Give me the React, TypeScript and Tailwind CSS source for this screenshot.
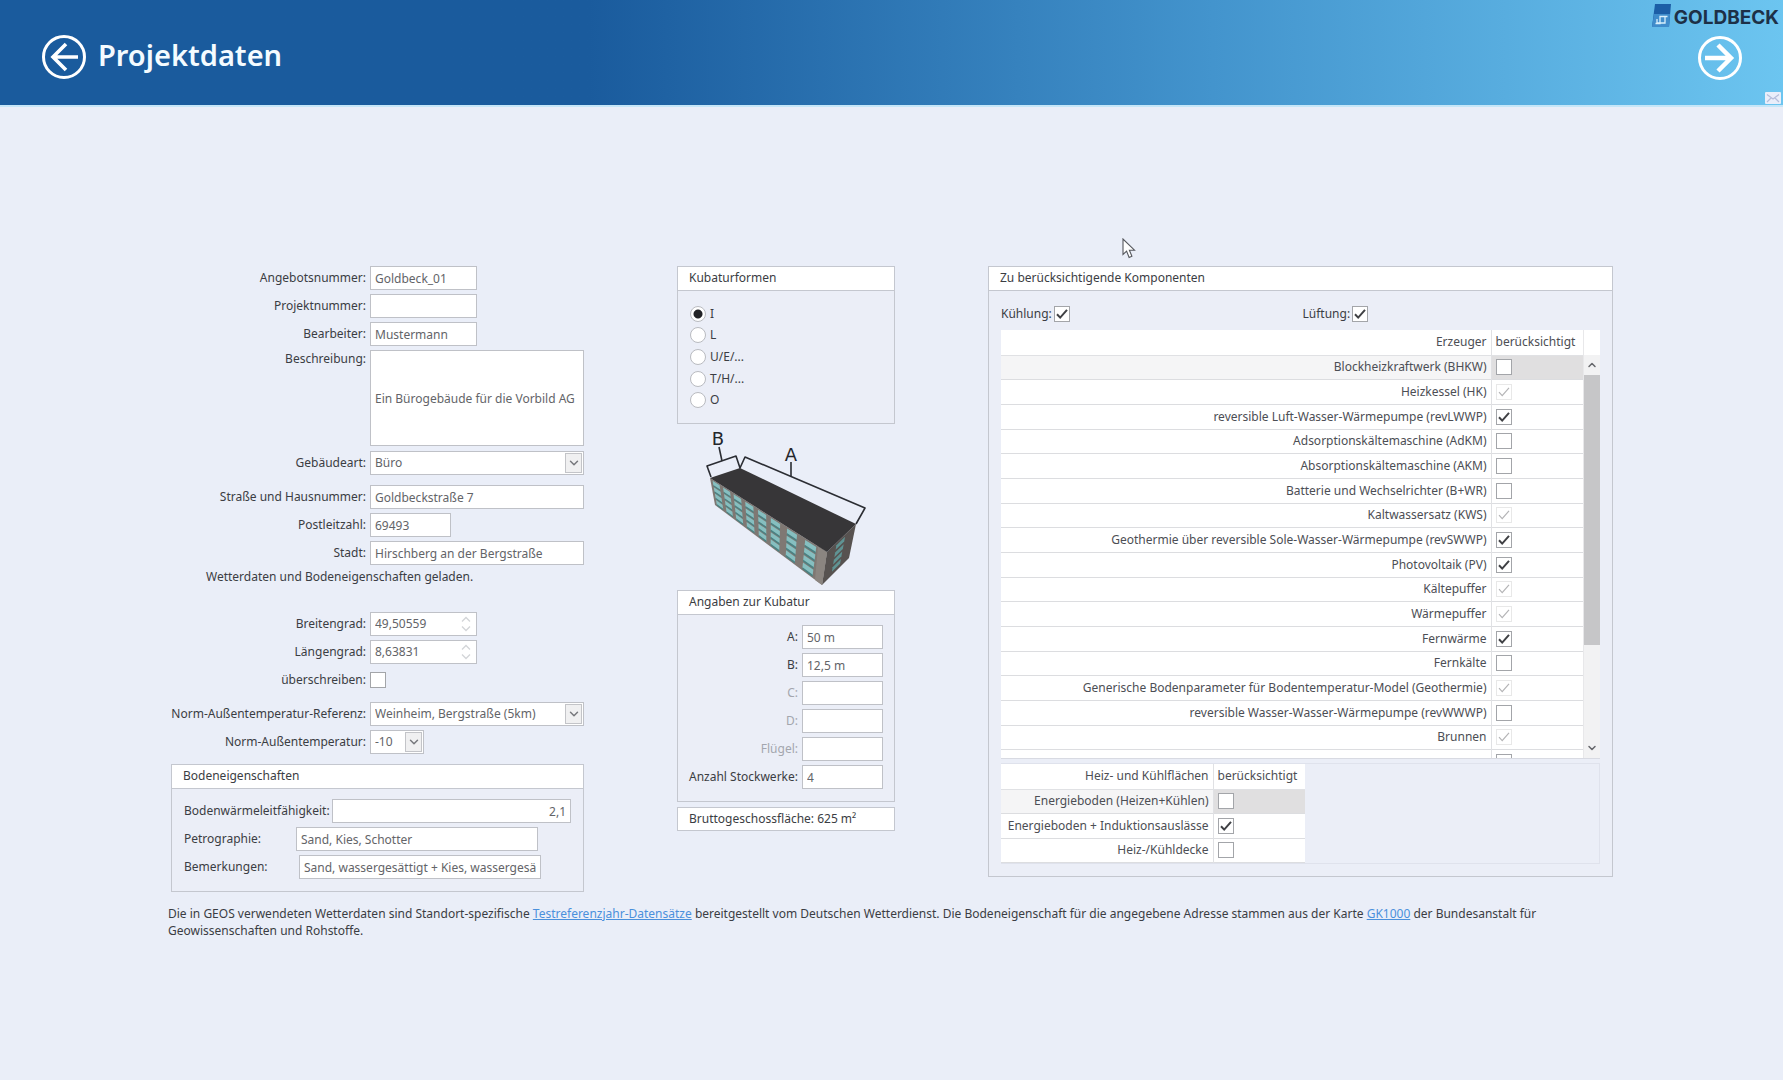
import * as React from "react";
import { ChevronDown, ChevronUp } from "lucide-react";
import clsx from "clsx";

interface ComponentRow {
  name: string;
  checked?: boolean;
  disabled?: boolean;
}

const PRODUCERS: ComponentRow[] = [
  { name: "Blockheizkraftwerk (BHKW)" },
  { name: "Heizkessel (HK)", checked: true, disabled: true },
  { name: "reversible Luft-Wasser-Wärmepumpe (revLWWP)", checked: true },
  { name: "Adsorptionskältemaschine (AdKM)" },
  { name: "Absorptionskältemaschine (AKM)" },
  { name: "Batterie und Wechselrichter (B+WR)" },
  { name: "Kaltwassersatz (KWS)", checked: true, disabled: true },
  { name: "Geothermie über reversible Sole-Wasser-Wärmepumpe (revSWWP)", checked: true },
  { name: "Photovoltaik (PV)", checked: true },
  { name: "Kältepuffer", checked: true, disabled: true },
  { name: "Wärmepuffer", checked: true, disabled: true },
  { name: "Fernwärme", checked: true },
  { name: "Fernkälte" },
  { name: "Generische Bodenparameter für Bodentemperatur-Model (Geothermie)", checked: true, disabled: true },
  { name: "reversible Wasser-Wasser-Wärmepumpe (revWWWP)" },
  { name: "Brunnen", checked: true, disabled: true },
  { name: "" },
];

const SURFACES: ComponentRow[] = [
  { name: "Energieboden (Heizen+Kühlen)" },
  { name: "Energieboden + Induktionsauslässe", checked: true },
  { name: "Heiz-/Kühldecke" },
];

const SHAPES = ["I", "L", "U/E/...", "T/H/...", "O"];

const inputClass = "h-6 border border-[#bfc1c7] bg-white px-1 text-[#636468] outline-none";

function Checkbox({
  id,
  label,
  checked,
  disabled,
}: {
  id?: string;
  label?: string;
  checked?: boolean;
  disabled?: boolean;
}) {
  return (
    <span className="grid size-4 shrink-0">
      <input
        id={id}
        type="checkbox"
        aria-label={label}
        defaultChecked={checked}
        disabled={disabled}
        className="peer col-start-1 row-start-1 size-4 appearance-none border border-[#a3a5a9] bg-white disabled:border-[#e8e8e8]"
      />
      <svg
        viewBox="0 0 16 16"
        className="pointer-events-none invisible col-start-1 row-start-1 size-4 text-[#3f4044] peer-checked:visible peer-disabled:text-[#b4b4b6]"
        fill="none"
        stroke="currentColor"
        strokeWidth={disabled ? 1.2 : 2}
      >
        <path d="M3 8.2 6.2 11.6 13 3.8" />
      </svg>
    </span>
  );
}

function Field({
  id,
  label,
  children,
}: {
  id: string;
  label: string;
  children: React.ReactNode;
}) {
  return (
    <div className="flex items-start">
      <label htmlFor={id} className="w-[199px] shrink-0 pr-1 text-right leading-6 whitespace-nowrap">
        {label}
      </label>
      {children}
    </div>
  );
}

function Select({ id, value, className }: { id: string; value: string; className?: string }) {
  return (
    <div className={clsx("relative h-6", className)}>
      <select
        id={id}
        defaultValue={value}
        className="h-6 w-full appearance-none border border-[#bfc1c7] bg-white pl-1 text-[#636468] outline-none"
      >
        <option>{value}</option>
      </select>
      <span className="pointer-events-none absolute top-0.5 right-0.5 bottom-0.5 flex w-[17px] items-center justify-center border border-[#c3c4c8] bg-[#f0f0f1]">
        <ChevronDown className="size-3.5 text-[#77787c]" strokeWidth={2.5} />
      </span>
    </div>
  );
}

function NumberField({ id, value }: { id: string; value: string }) {
  return (
    <div className="flex h-6 w-[107px] items-center border border-[#bfc1c7] bg-white pr-1">
      <input id={id} defaultValue={value} className="w-full min-w-0 px-1 text-[#636468] outline-none" />
      <svg viewBox="0 0 12 16" className="h-4 w-3 shrink-0" fill="none" stroke="#d3d5d8" strokeWidth="1.3">
        <path d="M2 5.5 6 1.5 10 5.5M2 10.5 6 14.5 10 10.5" />
      </svg>
    </div>
  );
}

function Panel({
  title,
  className,
  children,
}: {
  title: string;
  className?: string;
  children: React.ReactNode;
}) {
  return (
    <section className="border border-[#c4c7cf] bg-[#ebeef7]">
      <h2 className="h-6 border-b border-[#c4c7cf] bg-white px-[11px] leading-[22px]">{title}</h2>
      <div className={className}>{children}</div>
    </section>
  );
}

type Point = [number, number];

function lerp(a: Point, b: Point, t: number): Point {
  return [a[0] + (b[0] - a[0]) * t, a[1] + (b[1] - a[1]) * t];
}

// Corners run top-left, top-right, bottom-right, bottom-left
function facadePatch(corners: Point[], u0: number, u1: number, v0: number, v1: number) {
  const at = (u: number, v: number) =>
    lerp(lerp(corners[0], corners[1], u), lerp(corners[3], corners[2], u), v);
  return [at(u0, v0), at(u1, v0), at(u1, v1), at(u0, v1)].map((p) => p.join(",")).join(" ");
}

const LONG_SIDE: Point[] = [[33, 54], [150, 128], [145, 161], [38, 81]];
const SHORT_SIDE: Point[] = [[150, 128], [179, 100], [172, 134], [145, 161]];
const WINDOW_COLUMNS: Point[] = [
  [0.02, 0.08],
  [0.11, 0.17],
  [0.2, 0.265],
  [0.3, 0.37],
  [0.41, 0.48],
  [0.52, 0.6],
  [0.66, 0.745],
  [0.815, 0.91],
];
const FLOORS = [0, 1, 2, 3];

function Building() {
  return (
    <svg viewBox="0 0 218 166" className="h-[166px] w-full" role="img" aria-label="Gebäude mit den Seiten A und B">
      <polygon points="33,54 150,128 145,161 38,81" fill="#7f7873" />
      <polygon points="150,128 179,100 172,134 145,161" fill="#575250" />
      <polygon points="141,122 150,128 145,161 138,156" fill="#8b8580" />
      {WINDOW_COLUMNS.map(([u0, u1]) =>
        FLOORS.map((floor) => (
          <React.Fragment key={`${u0}-${floor}`}>
            <polygon
              points={facadePatch(LONG_SIDE, u0, u1, 0.05 + floor * 0.235, 0.22 + floor * 0.235)}
              fill="#86bfc0"
            />
            <polygon
              points={facadePatch(LONG_SIDE, u0, u1, 0.2 + floor * 0.235, 0.26 + floor * 0.235)}
              fill="#4a8283"
            />
          </React.Fragment>
        ))
      )}
      {FLOORS.map((floor) => (
        <polygon
          key={floor}
          points={facadePatch(SHORT_SIDE, 0.34, 0.64, 0.08 + floor * 0.22, 0.22 + floor * 0.22)}
          fill="#5f9393"
        />
      ))}
      <polygon points="33,54 63,44 179,100 150,128" fill="#373638" />
      <g fill="none" stroke="#2b2d33" strokeWidth="1.6" strokeLinejoin="round">
        <path d="M34 53 30 42 59 32 63 44 68 33 188 84 179 100" />
        <path d="M42 23 45 37M114 38V53" />
      </g>
      <g fill="#24262b" fontFamily="DejaVu Sans, sans-serif" fontSize="18" textAnchor="middle">
        <text x="41" y="21">B</text>
        <text x="114" y="37">A</text>
      </g>
    </svg>
  );
}

function DimensionField({
  id,
  label,
  value,
  disabled,
}: {
  id: string;
  label: string;
  value?: string;
  disabled?: boolean;
}) {
  return (
    <div className="flex items-center justify-end gap-1">
      <label htmlFor={id} className={clsx("whitespace-nowrap", disabled && "text-[#a3a6ae]")}>
        {label}
      </label>
      <input
        id={id}
        defaultValue={value}
        disabled={disabled}
        className={clsx(inputClass, "w-[81px] shrink-0")}
      />
    </div>
  );
}

function ComponentTable({
  heading,
  rows,
  className,
  nameClass,
}: {
  heading: string;
  rows: ComponentRow[];
  className?: string;
  nameClass?: string;
}) {
  return (
    <table className={clsx("border-collapse bg-white text-[#4c4e54]", className)}>
      <thead>
        <tr className="h-[25px] border-b border-[#e0e1e4]">
          <th scope="col" className={clsx("border-r border-[#e0e1e4] pr-1 text-right font-normal", nameClass)}>
            {heading}
          </th>
          <th scope="col" className="w-[92px] px-1 text-left font-normal">
            berücksichtigt
          </th>
        </tr>
      </thead>
      <tbody>
        {rows.map((row, index) => (
          <tr key={row.name} className="h-6 border-b border-[#dcdde0]">
            <td
              className={clsx(
                "border-r border-[#e0e1e4] pr-1 text-right leading-5 whitespace-nowrap",
                index === 0 && "bg-[#f5f5f6]"
              )}
            >
              {row.name}
            </td>
            <td className={clsx("px-1", index === 0 && "bg-[#e0dfe0]")}>
              <Checkbox label={row.name || "Weitere Komponente"} checked={row.checked} disabled={row.disabled} />
            </td>
          </tr>
        ))}
      </tbody>
    </table>
  );
}

function Header() {
  return (
    <header className="flex h-[107px] items-start justify-between border-b-2 border-[#c5e6f8] bg-linear-to-r from-[#1a5b9d] from-33% via-[#4394cd] via-68% to-[#6cc5f0] to-100%">
      <div className="flex items-center gap-[11px] pt-[34px] pl-[41px]">
        <button type="button" aria-label="Zurück" className="text-white">
          <svg viewBox="0 0 46 46" className="size-[46px]" fill="none" stroke="currentColor">
            <circle cx="23" cy="23" r="20.5" strokeWidth="3" />
            <path d="M37 23H12M25 10 12 23 25 36" strokeWidth="3.6" />
          </svg>
        </button>
        <h1 className="pb-1 text-[29px] leading-10 font-semibold text-[#f4fbff]">Projektdaten</h1>
      </div>
      <div className="flex flex-col items-end">
        <div className="flex h-[35px] items-start gap-0.5 pt-1 pr-1">
          <svg viewBox="0 0 20 23" className="h-[23px] w-5">
            <path d="M3 0h16l-2 23H0z" fill="#1c5ea6" />
            <path d="M2 10h16l-1 13H0z" fill="#3f8ccb" />
            <path d="M15.5 12.5H8v7H3.500M13 12.5v6.500H5v-4" fill="none" stroke="#d8effc" strokeWidth="1.3" />
          </svg>
          <span className="pt-1 font-[Inter,sans-serif] text-[19px] leading-5 font-bold text-[#1d3047]">
            GOLDBECK
          </span>
        </div>
        <button type="button" aria-label="Weiter" className="mr-10 text-white">
          <svg viewBox="0 0 46 46" className="size-[46px]" fill="none" stroke="currentColor">
            <circle cx="23" cy="23" r="20.5" strokeWidth="3" />
            <path d="M8 23H34M21 10 34 23 21 36" strokeWidth="4.5" />
          </svg>
        </button>
        <button type="button" aria-label="Nachricht" className="mt-[11px] mr-0.5">
          <svg viewBox="0 0 16 12" className="h-3 w-4">
            <rect width="16" height="12" rx="1" fill="#e9eefa" />
            <path d="M2 2.5 8 7l6-4.5M2 10l4-4M14 10l-4-4" fill="none" stroke="#b4bddb" strokeWidth="1.2" />
          </svg>
        </button>
      </div>
    </header>
  );
}

function ProjectForm() {
  return (
    <div>
      <div className="flex flex-col gap-1">
        <Field id="offer" label="Angebotsnummer:">
          <input id="offer" defaultValue="Goldbeck_01" className={clsx(inputClass, "w-[107px]")} />
        </Field>
        <Field id="project" label="Projektnummer:">
          <input id="project" className={clsx(inputClass, "w-[107px]")} />
        </Field>
        <Field id="editor" label="Bearbeiter:">
          <input id="editor" defaultValue="Mustermann" className={clsx(inputClass, "w-[107px]")} />
        </Field>
        <div className="flex items-start">
          <label htmlFor="description" className="w-[199px] shrink-0 pr-1 text-right leading-[18px]">
            Beschreibung:
          </label>
          <textarea
            id="description"
            defaultValue="Ein Bürogebäude für die Vorbild AG"
            className="h-24 min-w-0 flex-1 resize-none overflow-hidden border border-[#bfc1c7] bg-white px-1 py-[37px] leading-[22px] whitespace-nowrap text-[#636468] outline-none"
          />
        </div>
      </div>
      <div className="mt-[5px]">
        <Field id="building" label="Gebäudeart:">
          <Select id="building" value="Büro" className="flex-1" />
        </Field>
      </div>

      <div className="mt-[10px] flex flex-col gap-1">
        <Field id="street" label="Straße und Hausnummer:">
          <input id="street" defaultValue="Goldbeckstraße 7" className={clsx(inputClass, "min-w-0 flex-1")} />
        </Field>
        <Field id="zip" label="Postleitzahl:">
          <input id="zip" defaultValue="69493" className={clsx(inputClass, "w-[81px]")} />
        </Field>
        <Field id="city" label="Stadt:">
          <input
            id="city"
            defaultValue="Hirschberg an der Bergstraße"
            className={clsx(inputClass, "min-w-0 flex-1")}
          />
        </Field>
      </div>
      <p className="pl-[35px] leading-6">Wetterdaten und Bodeneigenschaften geladen.</p>

      <div className="mt-[23px] flex flex-col gap-1">
        <Field id="latitude" label="Breitengrad:">
          <NumberField id="latitude" value="49,50559" />
        </Field>
        <Field id="longitude" label="Längengrad:">
          <NumberField id="longitude" value="8,63831" />
        </Field>
        <Field id="override" label="überschreiben:">
          <span className="flex h-6 items-center">
            <Checkbox id="override" />
          </span>
        </Field>
      </div>

      <div className="mt-[10px] flex flex-col gap-1">
        <Field id="reference" label="Norm-Außentemperatur-Referenz:">
          <Select id="reference" value="Weinheim, Bergstraße (5km)" className="flex-1" />
        </Field>
        <Field id="temperature" label="Norm-Außentemperatur:">
          <Select id="temperature" value="-10" className="w-[54px]" />
        </Field>
      </div>

      <div className="mt-[10px]">
        <Panel title="Bodeneigenschaften" className="flex flex-col gap-1 px-3 pt-[10px] pb-3">
          <div className="flex items-center gap-0.5">
            <label htmlFor="conductivity" className="whitespace-nowrap">
              Bodenwärmeleitfähigkeit:
            </label>
            <input
              id="conductivity"
              defaultValue="2,1"
              className={clsx(inputClass, "min-w-0 flex-1 text-right")}
            />
          </div>
          <div className="flex items-center">
            <label htmlFor="petrography" className="w-28">
              Petrographie:
            </label>
            <input
              id="petrography"
              defaultValue="Sand, Kies, Schotter"
              className={clsx(inputClass, "w-[242px]")}
            />
          </div>
          <div className="flex items-center">
            <label htmlFor="remarks" className="w-[115px]">
              Bemerkungen:
            </label>
            <input
              id="remarks"
              defaultValue="Sand, wassergesättigt + Kies, wassergesättigt"
              className={clsx(inputClass, "w-[242px]")}
            />
          </div>
        </Panel>
      </div>
    </div>
  );
}

function CubatureForm() {
  return (
    <div>
      <Panel title="Kubaturformen" className="py-3 pl-3">
        <div className="grid h-[108px] grid-rows-5">
          {SHAPES.map((shape, index) => (
            <label key={shape} className="flex items-center gap-1">
              <input
                type="radio"
                name="shape"
                defaultChecked={index === 0}
                className="size-4 appearance-none rounded-full border border-[#b9bbc0] bg-white checked:bg-radial checked:from-[#222326] checked:from-40% checked:to-white checked:to-50%"
              />
              {shape}
            </label>
          ))}
        </div>
      </Panel>

      <Building />

      <Panel title="Angaben zur Kubatur" className="flex flex-col gap-1 pt-[10px] pr-[11px] pb-3">
        <DimensionField id="dim-a" label="A:" value="50 m" />
        <DimensionField id="dim-b" label="B:" value="12,5 m" />
        <DimensionField id="dim-c" label="C:" disabled />
        <DimensionField id="dim-d" label="D:" disabled />
        <DimensionField id="wing" label="Flügel:" disabled />
        <DimensionField id="floors" label="Anzahl Stockwerke:" value="4" />
      </Panel>
      <p className="mt-[5px] border border-[#c4c7cf] bg-white px-[11px] leading-[22px] whitespace-nowrap">
        Bruttogeschossfläche: 625 m²
      </p>
    </div>
  );
}

function ComponentsPanel() {
  return (
    <Panel title="Zu berücksichtigende Komponenten" className="px-3 pt-[11px] pb-3">
      <div className="grid h-6 grid-cols-2 gap-1">
        <div className="flex items-center gap-0.5">
          <label htmlFor="cooling">Kühlung:</label>
          <Checkbox id="cooling" checked />
        </div>
        <div className="flex items-center gap-0.5">
          <label htmlFor="ventilation">Lüftung:</label>
          <Checkbox id="ventilation" checked />
        </div>
      </div>

      {/* Producers with scrollbar */}
      <div className="mt-1 flex h-[429px] overflow-hidden border-b border-[#d8dae2] bg-white">
        <div className="min-w-0 flex-1 overflow-hidden">
          <ComponentTable heading="Erzeuger" rows={PRODUCERS} className="h-[445px] w-full" />
        </div>
        <div className="flex w-[17px] flex-col items-center border-l border-[#e8e8ea] text-[#66676b]">
          <div className="h-[25px] w-full" />
          <div className="flex w-full flex-1 flex-col items-center justify-between bg-[#f2f2f3]">
            <div className="flex w-full flex-col items-center">
              <ChevronUp className="my-1 size-3" strokeWidth={3} />
              <div className="h-[270px] w-full bg-[#c6c6c8]" />
            </div>
            <ChevronDown className="mb-1 size-3" strokeWidth={3} />
          </div>
        </div>
      </div>

      <div className="mt-1 flex border-t border-r border-b border-[#dfe2ec]">
        <ComponentTable heading="Heiz- und Kühlflächen" rows={SURFACES} className="h-[99px]" nameClass="w-[212px]" />
      </div>
    </Panel>
  );
}

export default function App() {
  return (
    <div className="min-h-screen bg-[#eaeef8] font-['Noto_Sans','Open_Sans',sans-serif] text-[12px] text-[#3b3d43]">
      <Header />
      <main className="px-[168px] pt-[159px] pb-12">
        <div className="relative grid grid-cols-[413px_218px_minmax(0,1fr)] items-start gap-x-[93px] pr-0.5 pl-[3px]">
          <ProjectForm />
          <CubatureForm />
          <ComponentsPanel />

          {/* Mouse pointer */}
          <svg viewBox="0 0 14 21" className="pointer-events-none absolute -top-7 left-[954px] h-[21px] w-3.5">
            <path
              d="M1 1v15.5l3.600-3.400 2.500 6.300 2.800-1.200-2.500-6H12.500z"
              fill="#fff"
              stroke="#55575d"
              strokeWidth="1.1"
            />
          </svg>
        </div>
        <p className="mt-[13px] leading-[17px]">
          Die in GEOS verwendeten Wetterdaten sind Standort-spezifische{" "}
          <a href="#testreferenzjahr" className="text-[#4a90dc] underline">
            Testreferenzjahr-Datensätze
          </a>{" "}
          bereitgestellt vom Deutschen Wetterdienst. Die Bodeneigenschaft für die angegebene Adresse stammen aus der
          Karte{" "}
          <a href="#gk1000" className="text-[#4a90dc] underline">
            GK1000
          </a>{" "}
          der Bundesanstalt für Geowissenschaften und Rohstoffe.
        </p>
      </main>
    </div>
  );
}
